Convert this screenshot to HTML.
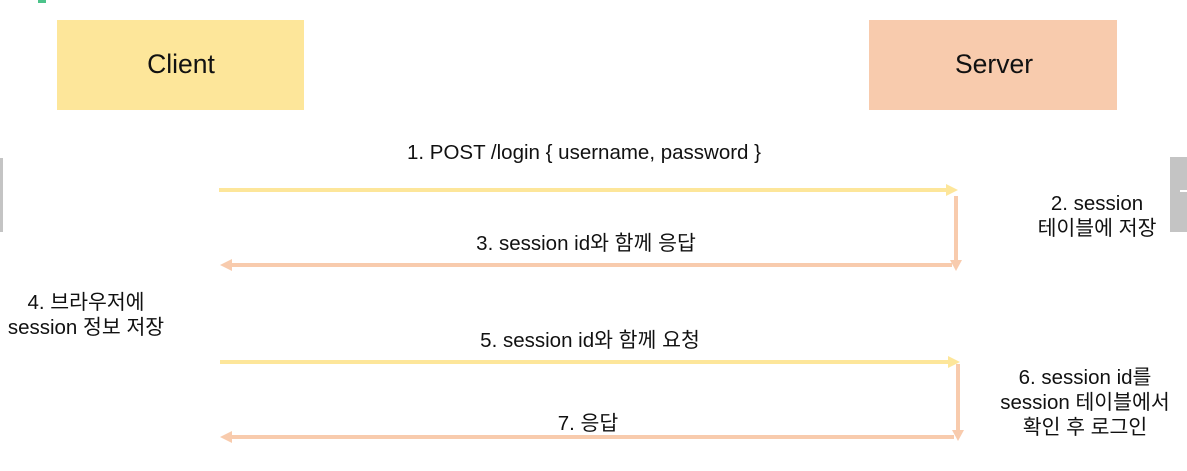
<!DOCTYPE html>
<html><head><meta charset="utf-8"><style>
body{margin:0;width:1187px;height:471px;background:#fff;overflow:hidden;position:relative;font-family:"Liberation Sans","Noto Sans CJK KR",sans-serif;}
.t{position:absolute;font-size:20.5px;color:#111;text-align:center;line-height:25px;white-space:nowrap;transform:translateX(-50%);}
</style></head><body>
<svg width="1187" height="471" style="position:absolute;left:0;top:0">
<rect x="38" y="0" width="8" height="3" fill="#4cc38a"/>
<rect x="57" y="20" width="247" height="90" fill="#fde69a"/>
<rect x="869" y="20" width="248" height="90" fill="#f8cbad"/>
<rect x="0" y="158" width="3" height="74" fill="#c4c4c4"/>
<rect x="1170" y="157" width="17" height="75" fill="#c4c4c4"/>
<rect x="1180" y="190" width="7" height="2" fill="#fff"/>
<g fill="#fde69a" stroke="#fde69a" stroke-width="4">
<line x1="219" y1="190" x2="948" y2="190"/><polygon points="946,184 958,190 946,196" stroke="none"/>
<line x1="220" y1="362" x2="950" y2="362"/><polygon points="948,356 960,362 948,368" stroke="none"/>
</g>
<g fill="#f8cbad" stroke="#f8cbad" stroke-width="4">
<line x1="956" y1="196" x2="956" y2="262"/><polygon points="950,260 956,271 962,260" stroke="none"/>
<line x1="952" y1="265" x2="230" y2="265"/><polygon points="232,259 220,265 232,271" stroke="none"/>
<line x1="958" y1="364" x2="958" y2="432"/><polygon points="952,430 958,441 964,430" stroke="none"/>
<line x1="954" y1="437" x2="230" y2="437"/><polygon points="232,431 220,437 232,443" stroke="none"/>
</g>
</svg>
<div class="t" style="left:181px;top:52px;font-size:26.5px">Client</div>
<div class="t" style="left:994px;top:52px;font-size:26.5px">Server</div>
<div class="t" style="left:584px;top:140px">1. POST /login { username, password }</div>
<div class="t" style="left:1097px;top:191px">2. session<br>테이블에 저장</div>
<div class="t" style="left:586px;top:231px">3. session id와 함께 응답</div>
<div class="t" style="left:86px;top:290px">4. 브라우저에<br>session 정보 저장</div>
<div class="t" style="left:590px;top:328px">5. session id와 함께 요청</div>
<div class="t" style="left:1085px;top:365px">6. session id를<br>session 테이블에서<br>확인 후 로그인</div>
<div class="t" style="left:588px;top:411px">7. 응답</div>
</body></html>
